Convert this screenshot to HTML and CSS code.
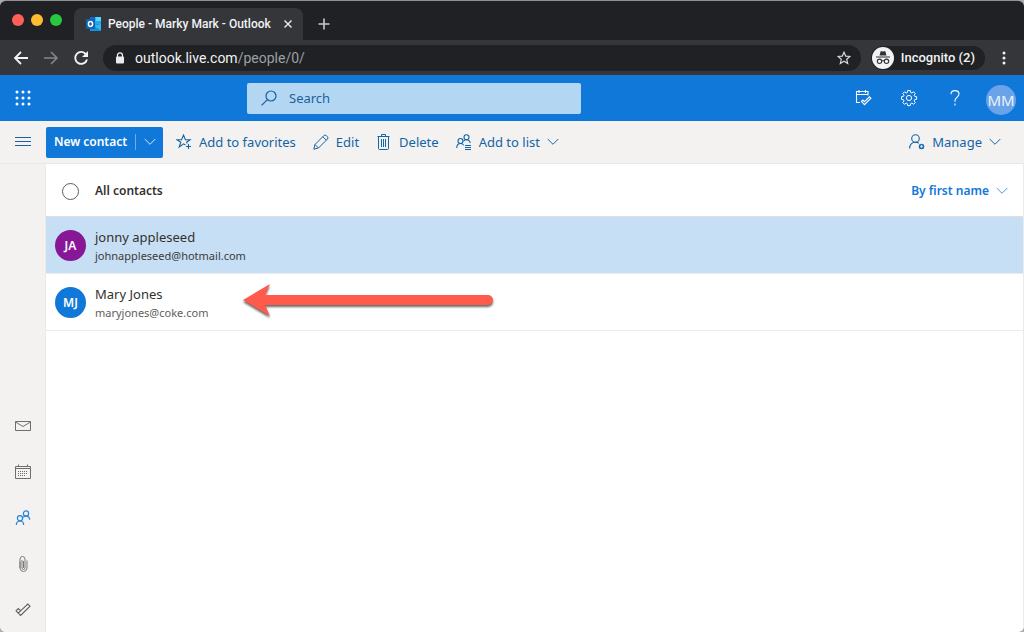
FILE: index.html
```html
<!DOCTYPE html>
<html lang="en">
<head>
<meta charset="utf-8">
<title>People - Marky Mark - Outlook</title>
<link rel="stylesheet" href="styles.css">
</head>
<body>
<div class="window">
  <div class="tabstrip">
    <div class="lights"><span class="light red"></span><span class="light yellow"></span><span class="light green"></span></div>
    <div class="tab">
      <svg class="favicon" width="16" height="16" viewBox="0 0 16 16"><path d="M4 1h11v9H4z" fill="#28a8ea"/><path d="M4 1h5.500v4H4z" fill="#0a6cc0"/><path d="M9.500 1H15v4H9.500z" fill="#50d9ff"/><path d="M4 9l11-1v6a1 1 0 0 1-1 1H4z" fill="#1490df"/><path d="M15 8v6.500L8 10z" fill="#35b8f1"/><rect x="0" y="3" width="9" height="10" rx="1" fill="#0f62b5"/><ellipse cx="4.500" cy="8" rx="2.100" ry="2.400" fill="none" stroke="#fff" stroke-width="1.500"/></svg>
      <span class="tab-title">People - Marky Mark - Outlook</span>
      <button class="plain tab-close" aria-label="Close tab"><svg width="10" height="10" viewBox="0 0 10 10"><path d="M1.500 1.500l7 7M8.500 1.500l-7 7" stroke="#dfe1e5" stroke-width="1.500"/></svg></button>
    </div>
    <button class="plain new-tab" aria-label="New tab"><svg width="12" height="12" viewBox="0 0 12 12"><path d="M6 0.500v11M0.500 6h11" stroke="#c8cacd" stroke-width="1.600"/></svg></button>
  </div>
  <div class="browserbar">
    <button class="plain" aria-label="Back"><svg width="16" height="16" viewBox="0 0 16 16"><path d="M15 8H2M8 2L2 8l6 6" fill="none" stroke="#f1f3f4" stroke-width="1.800"/></svg></button>
    <button class="plain" aria-label="Forward"><svg width="16" height="16" viewBox="0 0 16 16"><path d="M1 8h13M8 2l6 6-6 6" fill="none" stroke="#83858a" stroke-width="1.600"/></svg></button>
    <button class="plain" aria-label="Reload"><svg width="16" height="16" viewBox="0 0 16 16"><path d="M13.200 4.500A6 6 0 1 0 14 9.500" fill="none" stroke="#f1f3f4" stroke-width="1.900"/><path d="M15 1v6H9z" fill="#f1f3f4"/></svg></button>
    <div class="address">
      <svg width="10" height="12" viewBox="0 0 10 12"><path d="M2.500 5V3.300a2.500 2.500 0 0 1 5 0V5" fill="none" stroke="#e8eaed" stroke-width="1.300"/><rect x="1" y="4.500" width="8" height="7" rx="1" fill="#e8eaed"/></svg>
      <span class="url">outlook.live.com<span class="path">/people/0/</span></span>
      <button class="plain" aria-label="Bookmark"><svg width="14" height="14" viewBox="0 0 14 14"><path d="M7 1.200l1.700 3.900 4.200.4-3.200 2.800 1 4.200L7 10.300l-3.700 2.200 1-4.200L1.100 5.500l4.200-.4z" fill="none" stroke="#d5d7da" stroke-width="1.200"/></svg></button>
    </div>
    <div class="incognito">
      <svg width="22" height="22" viewBox="0 0 22 22"><circle cx="11" cy="11" r="11" fill="#f1f3f4"/><path d="M7.500 8.500L8.600 4.600q.3-.7 1-.4l1.400.4 1.400-.4q.7-.3 1 .4l1.100 3.900z" fill="#303134"/><path d="M4 10h14" stroke="#303134" stroke-width="1.200"/><circle cx="7.500" cy="14.300" r="2.200" fill="none" stroke="#303134" stroke-width="1.100"/><circle cx="14.500" cy="14.300" r="2.200" fill="none" stroke="#303134" stroke-width="1.100"/><path d="M9.700 14q1.300-.8 2.600 0" fill="none" stroke="#303134"/></svg>
      <span>Incognito (2)</span>
    </div>
    <button class="plain" aria-label="Browser menu"><svg width="4" height="14" viewBox="0 0 4 14" fill="#f1f3f4"><circle cx="2" cy="2" r="1.500"/><circle cx="2" cy="7" r="1.500"/><circle cx="2" cy="12" r="1.500"/></svg></button>
  </div>

  <header class="suite">
    <button class="plain side-cell" aria-label="App launcher"><svg width="16" height="16" viewBox="0 0 16 16" fill="#fff"><circle cx="2" cy="2" r="1.500"/><circle cx="8" cy="2" r="1.500"/><circle cx="14" cy="2" r="1.500"/><circle cx="2" cy="8" r="1.500"/><circle cx="8" cy="8" r="1.500"/><circle cx="14" cy="8" r="1.500"/><circle cx="2" cy="14" r="1.500"/><circle cx="8" cy="14" r="1.500"/><circle cx="14" cy="14" r="1.500"/></svg></button>
    <label class="search">
      <svg width="16" height="16" viewBox="0 0 16 16"><circle cx="10" cy="6" r="5" fill="none" stroke="#1c5f9c" stroke-width="1.200"/><path d="M6.400 9.600L.6 15.400" stroke="#1c5f9c" stroke-width="1.300"/></svg>
      <input type="text" placeholder="Search" aria-label="Search">
    </label>
    <div class="suite-tools">
      <button class="plain" aria-label="My Day"><svg width="18" height="18" viewBox="0 0 18 18" fill="none" stroke="#fff" stroke-width="1.100"><path d="M6 13.500H2.500v-11h11.500V6.500M2.500 5.500h11.500M5 1v3M11.500 1v3"/><path d="M7.500 12.500l1.400-1.400 1.600 1.600 4.900-4.900 1.500 1.400-6.400 6.400z"/></svg></button>
      <button class="plain" aria-label="Settings"><svg width="18" height="18" viewBox="0 0 18 18" fill="none" stroke="#fff" stroke-width="1"><path d="M7.700 1.500h2.600l.4 2 1.200.5 1.700-1.200 1.700 1.700L14.100 6.200l.5 1.100 2 .4v2.600l-2 .4-.5 1.200 1.200 1.700-1.700 1.700-1.700-1.200-1.200.5-.4 2H7.700l-.4-2-1.100-.5-1.700 1.200-1.700-1.700L4 11.900l-.5-1.200-2-.4V7.700l2-.4L4 6.200 2.800 4.500l1.700-1.700L6.200 4l1.100-.5z"/><circle cx="9" cy="9" r="2.600"/></svg></button>
      <button class="plain" aria-label="Help"><svg width="18" height="18" viewBox="0 0 18 18" fill="none" stroke="#fff" stroke-width="1.100"><path d="M5 5.300C5 3 6.700 1.600 9 1.600s4 1.400 4 3.500c0 3-4 3.500-4 6.400v1.200M9 14.500v1.900"/></svg></button>
      <button class="plain account" aria-label="Account">MM</button>
    </div>
  </header>

  <div class="commands">
    <button class="plain side-cell" aria-label="Toggle navigation"><svg width="16" height="10" viewBox="0 0 16 10"><path d="M0 .5h16M0 4.500h16M0 8.500h16" stroke="#1464a5"/></svg></button>
    <div class="new-contact">
      <button class="plain new-label">New contact</button>
      <button class="plain new-more" aria-label="More new options"><svg width="12" height="8" viewBox="0 0 12 8"><path d="M.7 1L6 6.300 11.300 1" fill="none" stroke="#d7e9fa"/></svg></button>
    </div>
    <div class="actions">
      <button class="plain action"><svg width="16" height="16" viewBox="0 0 16 16" fill="none" stroke="#1464a5" stroke-width="1.100"><path d="M9.500 11L7.500 9.800 3.200 13 4.800 8.300.9 5.700h4.700L7.500 1l1.900 4.700h4.700L10.600 8.200l.7 1.300M12.500 10v5M10 12.500h5"/></svg>Add to favorites</button>
      <button class="plain action"><svg width="16" height="16" viewBox="0 0 16 16" fill="none" stroke="#1464a5"><path d="M.8 15.200l1.200-4.700L11 1.500q1.200-1 2.400.1l1 1q1.100 1.200.1 2.400L5.500 14zM9.800 2.700l3.500 3.500M2 10.500L5.500 14"/></svg>Edit</button>
      <button class="plain action"><svg width="16" height="16" viewBox="0 0 16 16" fill="none" stroke="#1464a5"><path d="M1.500 2.500h12M5.500 2.500v-2h4v2M2.500 2.500v11.900q0 1.100 1.100 1.100h7.800q1.100 0 1.100-1.100V2.500M5.500 5v8M7.500 5v8M9.500 5v8"/></svg>Delete</button>
      <button class="plain action"><svg width="16" height="16" viewBox="0 0 16 16" fill="none" stroke="#1464a5" stroke-width="1.100"><circle cx="4.500" cy="7" r="2.500"/><path d="M.7 14q.2-4.500 3.800-4.500 2.300 0 3.200 1.700"/><circle cx="10.500" cy="3.200" r="2.500"/><path d="M7.500 7.200Q8.500 5.800 10.500 5.800q3.200 0 3.700 3.200M9 11.500h6M9 13.500h6M9 15.500h6"/></svg>Add to list<svg width="12" height="8" viewBox="0 0 12 8"><path d="M.7 1L6 6.300 11.300 1" fill="none" stroke="#1464a5"/></svg></button>
    </div>
    <button class="plain action manage"><svg width="16" height="16" viewBox="0 0 16 16" fill="none" stroke="#1464a5" stroke-width="1.100"><circle cx="6.500" cy="4.500" r="3.800"/><path d="M.6 14.500Q1 8.300 6.500 8.300q2 0 3.300.9"/><circle cx="12.500" cy="12.500" r="1.900" stroke-width="1.400"/><path d="M12.500 9.700v.8M12.500 14.500v.8M9.700 12.500h.8M14.500 12.500h.8M10.500 10.500l.6.600M13.900 13.900l.6.600M14.500 10.500l-.6.600M10.500 14.500l.6-.6"/></svg>Manage<svg width="12" height="8" viewBox="0 0 12 8"><path d="M.7 1L6 6.300 11.300 1" fill="none" stroke="#1464a5"/></svg></button>
  </div>

  <div class="body">
    <nav class="rail" aria-label="Modules">
      <a href="#" aria-label="Mail"><svg width="16" height="16" viewBox="0 0 16 16" fill="none" stroke="#706e6c"><path d="M.5 3.500h15v9H.5zM.5 4L8 8.500 15.500 4"/></svg></a>
      <a href="#" aria-label="Calendar"><svg width="16" height="16" viewBox="0 0 16 16" fill="none" stroke="#706e6c"><path d="M.5 2.500h15v12H.5zM.5 4.500h15M3.500.5v2M12.500.5v2"/><path d="M3 7.500h10M3 9.500h10M3 11.500h8" stroke-dasharray="1 1"/></svg></a>
      <a href="#" aria-label="People"><svg width="16" height="16" viewBox="0 0 16 16" fill="none" stroke="#2386dc" stroke-width="1.200"><circle cx="5" cy="8.300" r="2.600"/><path d="M1.300 15q.2-4 3.700-4t3.700 4"/><circle cx="11" cy="3.500" r="2.600"/><path d="M8 7.500q1-1.300 3-1.300 3.500 0 3.700 3.500"/></svg></a>
      <a href="#" aria-label="Files"><svg width="16" height="16" viewBox="0 0 16 16" fill="none" stroke="#7d7b79"><path d="M5 5.500V12q.3 3.500 3.500 3.500T12 12V4.500M10 4V3Q9.800.5 7.500.5T5 3v9M7 4v8q.2 1.500 1.500 1.500T10 12V4M8.500 5v7"/></svg></a>
      <a href="#" aria-label="To Do"><svg width="16" height="16" viewBox="0 0 16 16" fill="none" stroke="#605e5c" stroke-width="1.100"><path d="M1 8.800l2.300-2.300 2.300 2.300L12.800 2 15 4.200 5.600 13.400zM5.600 8.800L3.300 11.100"/></svg></a>
    </nav>
    <main class="list">
      <div class="list-head">
        <input class="select-all" type="checkbox" id="select-all">
        <label class="list-title" for="select-all">All contacts</label>
        <button class="plain sort">By first name<svg width="12" height="8" viewBox="0 0 12 8"><path d="M.7 1L6 6.300 11.300 1" fill="none" stroke="#4597df"/></svg></button>
      </div>
      <div class="contact selected">
        <span class="avatar purple">JA</span>
        <div class="details"><span class="name">jonny appleseed</span><span class="email">johnappleseed@hotmail.com</span></div>
      </div>
      <div class="contact">
        <span class="avatar blue">MJ</span>
        <div class="details"><span class="name">Mary Jones</span><span class="email">maryjones@coke.com</span></div>
        <svg class="pointer" width="256" height="40" viewBox="0 0 256 40"><path d="M1 18L28 2l-5 11H246a5 5 0 0 1 0 10H23l5 11z" fill="#ff5a4b"/></svg>
      </div>
    </main>
  </div>
</div>
</body>
</html>
```
FILE: styles.css
```css
* { box-sizing: border-box; }
html, body { height: 100%; }
body {
  margin: 0;
  background: #a9adb0;
  font-family: "Noto Sans", "Open Sans", sans-serif;
  font-size: 13px;
  line-height: 18px;
  color: #323130;
}
svg { display: block; flex: none; }
.plain {
  display: flex;
  align-items: center;
  justify-content: center;
  padding: 0;
  border: 0;
  background: none;
  color: inherit;
  font: inherit;
  white-space: nowrap;
}
.window {
  display: flex;
  flex-direction: column;
  min-height: 100%;
  border-top: 1px solid #8e9092;
  border-radius: 6px;
  overflow: hidden;
  background: #fff;
}

/* Browser chrome */
.tabstrip {
  display: flex;
  align-items: flex-end;
  height: 39px;
  background: #202124;
  font-family: Roboto, Inter, sans-serif;
}
.lights { display: flex; gap: 7px; padding: 0 6px 14px 12px; }
.light { width: 12px; height: 12px; border-radius: 50%; }
.red { background: #ff5f57; }
.yellow { background: #febc2e; }
.green { background: #28c840; }
.tab {
  display: flex;
  align-items: center;
  height: 32px;
  margin-left: 6px;
  padding: 0 10px 0 12px;
  border-radius: 8px 8px 0 0;
  background: #35363a;
}
.tab-title {
  width: 168px;
  margin-left: 6px;
  font-size: 12px;
  font-weight: 500;
  color: #f1f3f4;
  white-space: nowrap;
}
.tab-close { margin-left: 7px; }
.new-tab { height: 32px; margin-left: 15px; }
.browserbar {
  display: flex;
  align-items: center;
  gap: 14px;
  height: 35px;
  padding: 0 18px 0 13px;
  background: #35363a;
  color: #f1f3f4;
  font-family: Roboto, Inter, sans-serif;
}
.address {
  display: flex;
  flex: 1;
  align-items: center;
  height: 26px;
  padding: 0 10px 0 12px;
  border-radius: 13px;
  background: #202124;
  font-size: 14px;
}
.url { flex: 1; margin-left: 10px; }
.path { color: #9aa0a6; }
.incognito {
  display: flex;
  align-items: center;
  gap: 7px;
  height: 24px;
  margin: 0 3px 0 -4px;
  padding: 0 10px 0 1px;
  border-radius: 12px;
  background: #202124;
  font-weight: 500;
}

/* Suite header */
.suite {
  display: flex;
  align-items: center;
  height: 46px;
  background: #0f78d8;
}
.side-cell { width: 45px; height: 100%; margin-right: 1px; flex: none; }
.search {
  display: flex;
  align-items: center;
  width: 334px;
  height: 31px;
  margin-left: 201px;
  padding: 0 14px;
  gap: 12px;
  border-radius: 2px;
  background: #b3d7f3;
}
.search input {
  flex: 1;
  min-width: 0;
  padding: 0;
  border: 0;
  background: none;
  font: inherit;
  color: #1c5f9c;
}
.search input::placeholder { color: #1c5f9c; opacity: 1; }
.suite-tools {
  display: flex;
  align-items: center;
  gap: 28px;
  margin-left: auto;
  padding-right: 8px;
}
.account {
  width: 30px;
  height: 30px;
  margin: 4px 0 0 -6px;
  border-radius: 50%;
  background: #6ba3e8;
  color: #e9f2fc;
  font-size: 15px;
}

/* Command bar */
.commands {
  display: flex;
  align-items: center;
  height: 43px;
  border-bottom: 1px solid #eae8e6;
  background: #f3f2f1;
  color: #1464a5;
}
.new-contact {
  display: flex;
  align-items: center;
  width: 117px;
  height: 31px;
  border-radius: 2px;
  background: #0f78d8;
  color: #fff;
  font-size: 12px;
  font-weight: 600;
}
.new-label { flex: 1; height: 100%; }
.new-more { width: 28px; height: 16px; border-left: 1px solid #6aaee9; }
.actions { display: flex; gap: 17px; margin-left: 13px; }
.action { gap: 7px; }
.manage { margin-left: auto; padding-right: 23px; }

/* Page body */
.body { display: flex; flex: 1; }
.rail {
  display: flex;
  flex: none;
  flex-direction: column;
  justify-content: flex-end;
  width: 46px;
  border-right: 1px solid #edebe9;
  background: #f3f2f1;
}
.rail a {
  display: flex;
  align-items: center;
  justify-content: center;
  height: 46px;
  padding-top: 2px;
}
.list { flex: 1; min-width: 0; border-right: 1px solid #edebe9; }
.list-head {
  display: flex;
  align-items: center;
  height: 53px;
  padding: 2px 15px 0 16px;
  border-bottom: 1px solid #e1dfdd;
  font-size: 12px;
  font-weight: 600;
}
.select-all {
  width: 17px;
  height: 17px;
  margin: 0;
  border: 1px solid #605e5c;
  border-radius: 50%;
  appearance: none;
  background: #fff;
}
.list-title { margin-left: 16px; }
.sort { gap: 7px; margin-left: auto; color: #0f78d8; }
.contact {
  position: relative;
  display: flex;
  align-items: center;
  gap: 9px;
  height: 57px;
  padding-left: 9px;
  border-bottom: 1px solid #edebe9;
}
.selected { background: #c7dff4; }
.avatar {
  width: 31px;
  height: 31px;
  border-radius: 50%;
  color: #fff;
  font-size: 12px;
  font-weight: 600;
  line-height: 31px;
  text-align: center;
}
.purple { background: #881798; }
.blue { background: #0f78d8; }
.details { display: flex; flex-direction: column; gap: 1px; padding-top: 2px; }
.email { font-size: 11px; color: #605e5c; }
.selected .email { color: #3b3a39; }
.pointer {
  position: absolute;
  left: 196px;
  top: 8px;
  filter: drop-shadow(0 2px 1px rgba(0, 0, 0, 0.6));
}
```
